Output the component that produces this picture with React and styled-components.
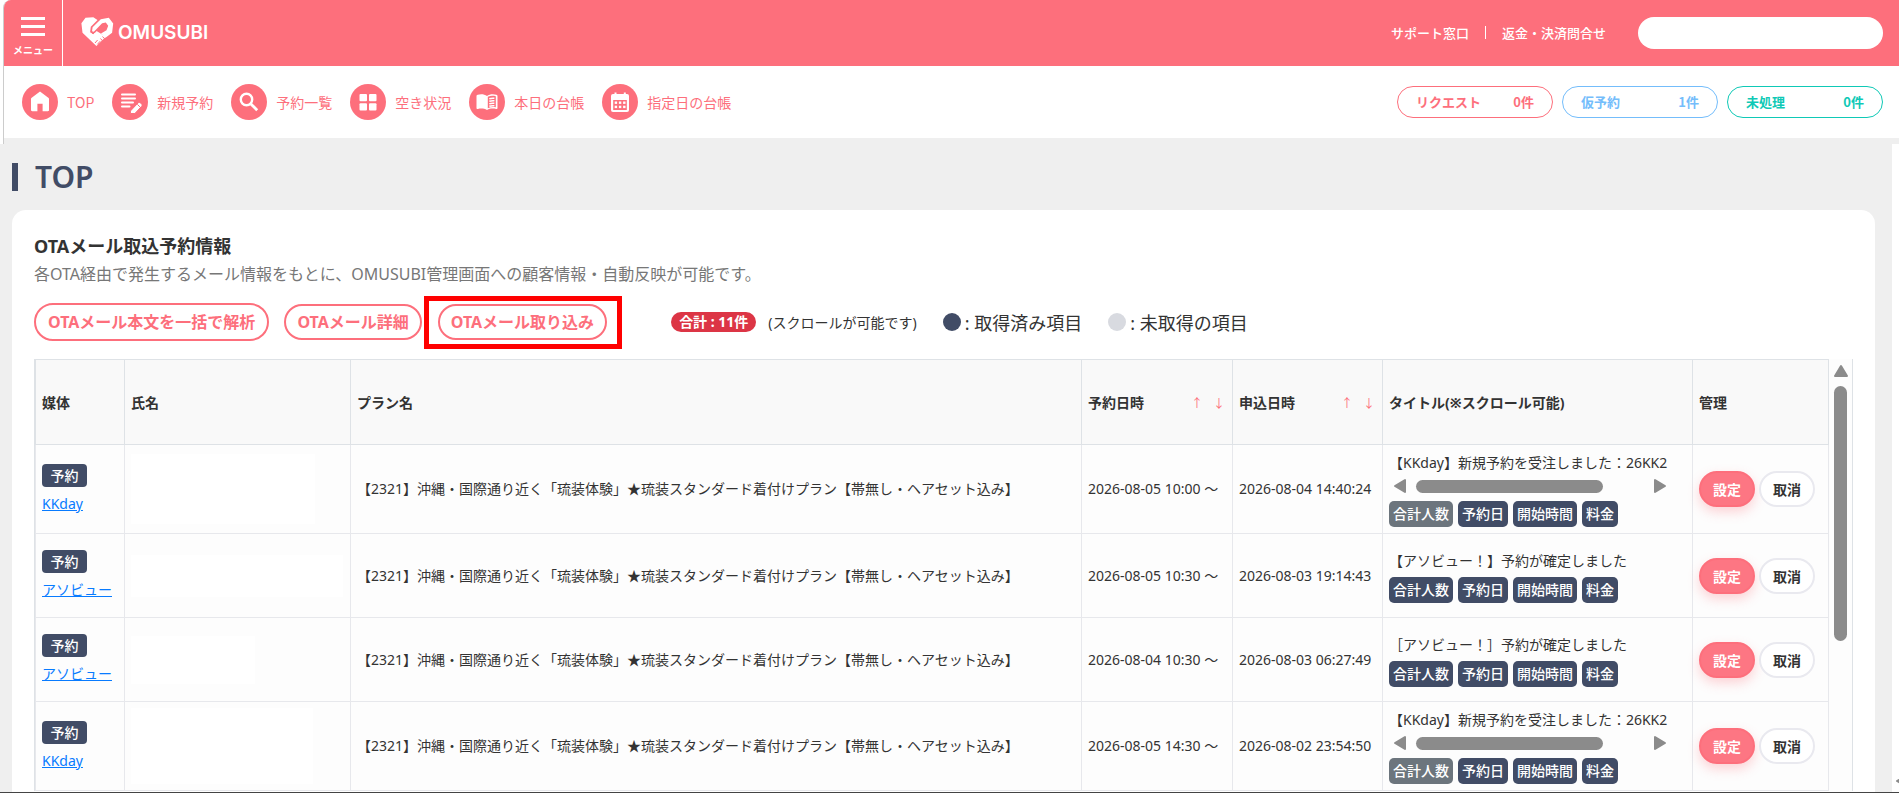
import React from "react";
import styled, { createGlobalStyle } from "styled-components";

const PINK = "#fd6f7c";
const NAVY = "#414c66";

const NAV_ITEMS = [
  { label: "TOP", icon: "home" },
  { label: "新規予約", icon: "edit" },
  { label: "予約一覧", icon: "search" },
  { label: "空き状況", icon: "grid" },
  { label: "本日の台帳", icon: "book" },
  { label: "指定日の台帳", icon: "calendar" },
];

const COUNTERS = [
  { label: "リクエスト", count: "0件", color: "#fd6f7c" },
  { label: "仮予約", count: "1件", color: "#74bdfb" },
  { label: "未処理", count: "0件", color: "#0fc9b6" },
];

const PLAN =
  "【2321】沖縄・国際通り近く「琉装体験」★琉装スタンダード着付けプラン【帯無し・ヘアセット込み】";

const ROWS = [
  {
    media: "KKday",
    mask: [184, 70],
    reserved: "2026-08-05 10:00 ～",
    applied: "2026-08-04 14:40:24",
    title: "【KKday】新規予約を受注しました：26KK2",
    long: true,
  },
  {
    media: "アソビュー",
    mask: [212, 42],
    reserved: "2026-08-05 10:30 ～",
    applied: "2026-08-03 19:14:43",
    title: "【アソビュー！】予約が確定しました",
  },
  {
    media: "アソビュー",
    mask: [124, 48],
    reserved: "2026-08-04 10:30 ～",
    applied: "2026-08-03 06:27:49",
    title: "［アソビュー！］予約が確定しました",
  },
  {
    media: "KKday",
    mask: [182, 76],
    reserved: "2026-08-05 14:30 ～",
    applied: "2026-08-02 23:54:50",
    title: "【KKday】新規予約を受注しました：26KK2",
    long: true,
  },
];

const TAGS = ["合計人数", "予約日", "開始時間", "料金"];

function NavIcon({ name }) {
  return (
    <svg width="36" height="36" viewBox="0 0 36 36" aria-hidden="true">
      <circle cx="18" cy="18" r="18" fill={PINK} />
      {name === "home" && (
        <path
          d="M18 7.500l8.300 6.200c.5.400.7.800.7 1.400V26c0 .8-.4 1.200-1.200 1.200H20.600v-7.400h-5.200v7.400H10.200C9.400 27.200 9 26.800 9 26V15.100c0-.6.200-1 .7-1.400z"
          fill="#fff"
        />
      )}
      {name === "edit" && (
        <g>
          <path
            d="M10 10.500h13M10 14.500h13M10 18.500h11M10 22.500h7.500"
            stroke="#fff"
            strokeWidth="2"
            strokeLinecap="round"
          />
          <path
            d="M18.400 27l7.600-8c.8-.8 1.700-.8 2.500-.1l1 1c.8.8.8 1.700 0 2.500L22.900 29.500h-4.500z"
            fill="#fff"
            stroke={PINK}
            strokeWidth="1"
          />
          <path d="M25.300 20.300l2.600 2.600" stroke={PINK} strokeWidth="1" />
        </g>
      )}
      {name === "search" && (
        <g stroke="#fff" fill="none">
          <circle cx="15.500" cy="15.500" r="5.700" strokeWidth="2.400" />
          <path d="M19.700 19.700l6.500 6.500" strokeWidth="2.800" />
        </g>
      )}
      {name === "grid" && (
        <g fill="#fff">
          <rect x="9.500" y="10" width="7.500" height="7.300" rx="1" />
          <rect x="19" y="10" width="7.500" height="7.300" rx="1" />
          <rect x="9.500" y="19.200" width="7.500" height="7.300" rx="1" />
          <rect x="19" y="19.200" width="7.500" height="7.300" rx="1" />
        </g>
      )}
      {name === "book" && (
        <g>
          <path
            d="M18 12c-2.500-2-6.300-2.300-9.300-1.300-.9.300-1.200.7-1.200 1.500V24c0 .9.600 1.200 1.400 1 3-.7 6.300-.5 9.100 1 2.800-1.500 6.100-1.700 9.100-1 .8.200 1.400-.1 1.400-1V12.200c0-.8-.3-1.200-1.200-1.500-3-1-6.800-.7-9.300 1.300z"
            fill="#fff"
          />
          <path
            d="M18.800 12.800v11.400c2.500-1.200 5.200-1.300 8-.9V12.200c-2.900-.7-5.500-.6-8 .6z"
            fill={PINK}
          />
          <path
            d="M20.300 14.800c1.700-.6 3.300-.7 5.100-.5M20.300 17.300c1.700-.6 3.300-.7 5.100-.5M20.300 19.800c1.700-.6 3.300-.7 5.100-.5M20.300 22.300c1.700-.6 3.300-.7 5.100-.5"
            stroke="#fff"
            strokeWidth="1.500"
            fill="none"
          />
        </g>
      )}
      {name === "calendar" && (
        <g>
          <path d="M13.500 8.500v3M22.800 8.500v3" stroke="#fff" strokeWidth="2" />
          <rect x="9" y="10" width="18" height="18" rx="2" fill="#fff" />
          <rect x="11.200" y="16" width="13.600" height="10" fill={PINK} />
          <g fill="#fff">
            {[12.7, 16.9, 21.1].map((x) => (
              <React.Fragment key={x}>
                <rect x={x} y="17.500" width="2.400" height="2.400" />
                <rect x={x} y="21.700" width="2.400" height="2.400" />
              </React.Fragment>
            ))}
          </g>
        </g>
      )}
    </svg>
  );
}

// two hands clasped into a heart
function LogoMark() {
  return (
    <svg width="33" height="30" viewBox="0 0 33 30" aria-hidden="true">
      <path
        d="M4.500.8L12.300.3l4.200 2.800L9.800 9.800l-.7 5.400 3 1.900 3.500-3.200 9.200 5.800-9.400 9.400L1.500 15.800.4 6.300z"
        fill="#fff"
      />
      <path
        d="M12.800 14.800l-1.800-.6.6-3.900L19.800 2.200 27.800.8l4.400 5.700-1.100 9.200-6.600 5-4.500-4.300 5.500-3.200 1.700-4.500-2.400-3.100-3.700.6-5.800 6z"
        fill="#fff"
      />
      <path
        d="M10.600 15.500l1.500 1.300 3.200-2.800M14 26l2.600-3M16.400 27.400l2.800-3.200M19.500 21.500l2 2.400M21.500 19.500l1.800 2"
        stroke={PINK}
        strokeWidth="1"
        fill="none"
      />
    </svg>
  );
}

function Arrow({ dir }) {
  const points = {
    up: "8,3 14,13 2,13",
    left: "3,8 13,2 13,14",
    right: "13,8 3,2 3,14",
  };
  return (
    <svg width="16" height="16" viewBox="0 0 16 16" aria-hidden="true">
      <polygon
        points={points[dir]}
        fill="#8b8b8b"
        stroke="#8b8b8b"
        strokeWidth="2"
        strokeLinejoin="round"
      />
    </svg>
  );
}

function ReservationRow({ row }) {
  return (
    <tr>
      <Cell>
        <Status>予約</Status>
        <MediaLink href="#media">{row.media}</MediaLink>
      </Cell>
      <Cell>
        <NameMask $w={row.mask[0]} $h={row.mask[1]} />
      </Cell>
      <Cell>{PLAN}</Cell>
      <Cell>{row.reserved}</Cell>
      <Cell>{row.applied}</Cell>
      <Cell>
        <MailTitle>{row.title}</MailTitle>
        {row.long && (
          <TitleScroll>
            <Arrow dir="left" />
            <TitleTrack>
              <TitleThumb />
            </TitleTrack>
            <Arrow dir="right" />
          </TitleScroll>
        )}
        <TagList>
          {TAGS.map((tag, i) => (
            <Tag key={tag} $muted={row.long && i === 0}>
              {tag}
            </Tag>
          ))}
        </TagList>
      </Cell>
      <Cell>
        <Actions>
          <RowButton type="button" $primary>
            設定
          </RowButton>
          <RowButton type="button">取消</RowButton>
        </Actions>
      </Cell>
    </tr>
  );
}

function SortHead({ children }) {
  return (
    <HeadCell>
      <SortLabel>
        {children}
        <SortArrows>
          <SortButton type="button" aria-label="昇順">
            ↑
          </SortButton>
          <SortButton type="button" aria-label="降順">
            ↓
          </SortButton>
        </SortArrows>
      </SortLabel>
    </HeadCell>
  );
}

export default function App() {
  return (
    <Page>
      <GlobalStyle />
      <Top>
        <Header>
          <MenuButton type="button">
            <Bars>
              <Bar />
              <Bar />
              <Bar />
            </Bars>
            メニュー
          </MenuButton>
          <Logo href="#top">
            <LogoMark />
            OMUSUBI
          </Logo>
          <HeaderLinks>
            <HeaderLink href="#support">サポート窓口</HeaderLink>
            <Divider />
            <HeaderLink href="#refund">返金・決済問合せ</HeaderLink>
          </HeaderLinks>
          <Account type="text" aria-label="アカウント" />
        </Header>
        <Nav>
          {NAV_ITEMS.map((item) => (
            <NavLink key={item.label} href={`#${item.icon}`}>
              <NavIcon name={item.icon} />
              {item.label}
            </NavLink>
          ))}
          <Counters>
            {COUNTERS.map((c) => (
              <Counter key={c.label} href="#counter" $color={c.color}>
                <span>{c.label}</span>
                <span>{c.count}</span>
              </Counter>
            ))}
          </Counters>
        </Nav>
      </Top>
      <Body>
        <Main>
          <PageTitle>TOP</PageTitle>
          <Card>
            <CardTitle>OTAメール取込予約情報</CardTitle>
            <Lead>
              各OTA経由で発生するメール情報をもとに、OMUSUBI管理画面への顧客情報・自動反映が可能です。
            </Lead>
            <Toolbar>
              <OutlineButton type="button" $large>
                OTAメール本文を一括で解析
              </OutlineButton>
              <OutlineButton type="button">OTAメール詳細</OutlineButton>
              <Highlight>
                <OutlineButton type="button">OTAメール取り込み</OutlineButton>
              </Highlight>
              <Total>合計 : 11件</Total>
              <Hint>(スクロールが可能です)</Hint>
              <Legend>
                <Dot $color={NAVY} />: 取得済み項目
              </Legend>
              <Legend>
                <Dot $color="#d8dae0" />: 未取得の項目
              </Legend>
            </Toolbar>
            <TableFrame>
              <Table>
                <colgroup>
                  <Col $w={89} />
                  <Col $w={226} />
                  <Col />
                  <Col $w={151} />
                  <Col $w={150} />
                  <Col $w={310} />
                  <Col $w={136} />
                </colgroup>
                <thead>
                  <tr>
                    <HeadCell>媒体</HeadCell>
                    <HeadCell>氏名</HeadCell>
                    <HeadCell>プラン名</HeadCell>
                    <SortHead>予約日時</SortHead>
                    <SortHead>申込日時</SortHead>
                    <HeadCell>タイトル(※スクロール可能)</HeadCell>
                    <HeadCell>管理</HeadCell>
                  </tr>
                </thead>
                <tbody>
                  {ROWS.map((row) => (
                    <ReservationRow key={row.applied} row={row} />
                  ))}
                </tbody>
              </Table>
              <Rail>
                <Arrow dir="up" />
                <RailThumb />
              </Rail>
            </TableFrame>
          </Card>
        </Main>
        <Gutter>
          <Arrow dir="left" />
        </Gutter>
      </Body>
    </Page>
  );
}

const GlobalStyle = createGlobalStyle`
  * {
    box-sizing: border-box;
  }
  body {
    margin: 0;
    font-family: "Noto Sans", "Noto Sans CJK JP", sans-serif;
    font-size: 14px;
    color: #333;
    background: #fff;
  }
  button, input {
    font-family: inherit;
  }
  a {
    text-decoration: none;
  }
`;

const Page = styled.div`
  display: flex;
  flex-direction: column;
  height: 100vh;
  overflow: hidden;
  border-bottom: 1px solid #444;
`;

const Top = styled.div`
  flex: none;
  margin-left: 3px;
  padding-bottom: 6px;
  border-left: 1px solid #ccc;
  border-top-left-radius: 8px;
  background: #efefef;
  overflow: hidden;
  font-family: "Noto Sans CJK JP", sans-serif;
`;

const Header = styled.header`
  display: flex;
  align-items: center;
  height: 66px;
  padding-right: 16px;
  background: ${PINK};
`;

const MenuButton = styled.button`
  display: flex;
  flex-direction: column;
  align-items: center;
  gap: 7px;
  align-self: stretch;
  width: 59px;
  padding: 17px 0 0;
  border: 0;
  border-right: 1px solid #fff;
  background: none;
  color: #fff;
  font-size: 10px;
  font-weight: 700;
  line-height: 14px;
`;

const Bars = styled.span`
  display: flex;
  flex-direction: column;
  gap: 5px;
`;

const Bar = styled.span`
  width: 24px;
  height: 3px;
  background: #fff;
`;

const Logo = styled.a`
  display: flex;
  align-items: center;
  gap: 4px;
  margin-left: 18px;
  padding-bottom: 2px;
  color: #fff;
  font-family: Inter, sans-serif;
  font-size: 19px;
  font-weight: 600;
`;

const HeaderLinks = styled.nav`
  display: flex;
  align-items: center;
  gap: 16px;
  margin-left: auto;
  margin-right: 32px;
  padding-bottom: 1px;
`;

const HeaderLink = styled.a`
  color: #fff;
  font-size: 13px;
  font-weight: 500;
`;

const Divider = styled.span`
  width: 1px;
  height: 13px;
  background: #fff;
`;

const Account = styled.input`
  width: 245px;
  height: 32px;
  padding: 0 16px;
  border: 0;
  border-radius: 16px;
  background: #fff;
`;

const Nav = styled.nav`
  display: flex;
  align-items: center;
  gap: 18px;
  height: 72px;
  padding: 0 16px 0 18px;
  background: #fff;
`;

const NavLink = styled.a`
  display: flex;
  align-items: center;
  gap: 9px;
  color: ${PINK};
  font-size: 14px;
  line-height: 20px;
  white-space: nowrap;
`;

const Counters = styled.div`
  display: flex;
  gap: 9px;
  margin-left: auto;
`;

const Counter = styled.a`
  display: flex;
  justify-content: space-between;
  align-items: center;
  width: 156px;
  height: 32px;
  padding: 0 18px;
  border: 1px solid ${({ $color }) => $color};
  border-radius: 16px;
  color: ${({ $color }) => $color};
  font-size: 13px;
  font-weight: 700;
  line-height: 18px;
`;

const Body = styled.div`
  display: flex;
  flex: 1;
  min-height: 0;
  background: #efefef;
`;

const Main = styled.main`
  flex: 1;
  min-width: 0;
  padding: 12px 17px 0 12px;
`;

const Gutter = styled.div`
  width: 7px;
  padding: 629px 0 0 2px;
  background: #fff;
  overflow: hidden;
`;

const PageTitle = styled.h1`
  display: flex;
  align-items: center;
  gap: 17px;
  margin: 0 0 12px;
  color: ${NAVY};
  font-size: 30px;
  font-weight: 600;
  line-height: 42px;
  &::before {
    content: "";
    width: 6px;
    height: 28px;
    background: ${NAVY};
  }
`;

const Card = styled.section`
  padding: 22px 22px 40px;
  border-radius: 14px;
  background: #fff;
`;

const CardTitle = styled.h2`
  margin: 0;
  font-size: 18px;
  font-weight: 700;
  line-height: 28px;
`;

const Lead = styled.p`
  margin: 0;
  color: #777;
  font-size: 16px;
  line-height: 28px;
`;

const Toolbar = styled.div`
  display: flex;
  align-items: center;
  height: 54px;
  margin: 7px 0 10px;
  white-space: nowrap;
`;

const OutlineButton = styled.button`
  height: ${({ $large }) => ($large ? 38 : 36)}px;
  margin-right: ${({ $large }) => ($large ? 15 : 2)}px;
  padding: 0 ${({ $large }) => ($large ? 12 : 11)}px;
  border: 2px solid ${PINK};
  border-radius: 19px;
  background: #fff;
  color: ${PINK};
  font-size: 16px;
  font-weight: 700;
  line-height: 24px;
`;

const Highlight = styled.div`
  display: flex;
  align-items: center;
  height: 53px;
  margin-right: 49px;
  padding: 0 8px 0 9px;
  border: 5px solid #f00;
`;

const Total = styled.span`
  padding: 0 8px;
  border-radius: 10px;
  background: #dc3545;
  color: #fff;
  font-size: 14px;
  font-weight: 700;
  line-height: 20px;
`;

const Hint = styled.span`
  margin-left: 12px;
  font-size: 14px;
`;

const Legend = styled.span`
  display: flex;
  align-items: center;
  gap: 4px;
  margin-left: 26px;
  font-size: 18px;
`;

const Dot = styled.span`
  width: 18px;
  height: 18px;
  border-radius: 50%;
  background: ${({ $color }) => $color};
`;

const TableFrame = styled.div`
  display: flex;
  border: 1px solid #dee2e6;
  border-width: 0 1px;
  background: #fdfdfd;
`;

const Table = styled.table`
  flex: 1;
  width: 100%;
  table-layout: fixed;
  border-collapse: collapse;
`;

const Col = styled.col`
  width: ${({ $w }) => ($w ? `${$w}px` : "auto")};
`;

const HeadCell = styled.th`
  height: 85px;
  padding: 0 6px;
  border: 1px solid #dee2e6;
  background: #f9f9f9;
  font-size: 14px;
  font-weight: 700;
  text-align: left;
`;

const SortLabel = styled.div`
  display: flex;
  justify-content: space-between;
  align-items: center;
`;

const SortArrows = styled.span`
  display: flex;
  gap: 8px;
`;

const SortButton = styled.button`
  width: 14px;
  padding: 0;
  border: 0;
  background: none;
  color: ${PINK};
  font-family: "Noto Sans CJK JP", sans-serif;
  font-size: 12px;
`;

const Cell = styled.td`
  height: 84px;
  padding: 6px;
  border: 1px solid #e7e8ec;
  line-height: 22px;
  white-space: nowrap;
`;

const Status = styled.span`
  display: block;
  width: 45px;
  margin-bottom: 6px;
  border-radius: 4px;
  background: ${NAVY};
  color: #fff;
  font-weight: 500;
  line-height: 23px;
  text-align: center;
`;

const MediaLink = styled.a`
  color: #087bff;
  text-decoration: underline;
`;

const NameMask = styled.div`
  width: ${({ $w }) => $w}px;
  height: ${({ $h }) => $h}px;
  background: #fff;
`;

const MailTitle = styled.div`
  line-height: 24px;
`;

const TitleScroll = styled.div`
  display: flex;
  align-items: center;
  gap: 8px;
  width: 282px;
  height: 22px;
  padding: 0 3px;
`;

const TitleTrack = styled.div`
  flex: 1;
`;

const TitleThumb = styled.div`
  width: 82%;
  height: 13px;
  border-radius: 7px;
  background: #8b8b8b;
`;

const TagList = styled.div`
  display: flex;
  gap: 5px;
  margin-top: 4px;
`;

const Tag = styled.span`
  padding: 0 4px;
  border-radius: 5px;
  background: ${({ $muted }) => ($muted ? "#6c757d" : NAVY)};
  color: #fff;
  font-weight: 500;
  line-height: 26px;
`;

const Actions = styled.div`
  display: flex;
  gap: 4px;
`;

const RowButton = styled.button`
  width: 56px;
  height: 36px;
  padding: 0;
  border: 2px solid ${({ $primary }) => ($primary ? PINK : "#e9e9ef")};
  border-radius: 18px;
  background: ${({ $primary }) => ($primary ? "#fd7683" : "#fff")};
  color: ${({ $primary }) => ($primary ? "#fff" : "#333")};
  box-shadow: ${({ $primary }) =>
    $primary ? "0 5px 12px rgba(253, 111, 124, 0.3)" : "none"};
  font-size: 14px;
  font-weight: 700;
`;

const Rail = styled.div`
  display: flex;
  flex-direction: column;
  align-items: center;
  gap: 7px;
  width: 23px;
  flex: none;
  padding-top: 4px;
`;

const RailThumb = styled.div`
  width: 13px;
  height: 255px;
  border-radius: 7px;
  background: #8b8b8b;
`;
